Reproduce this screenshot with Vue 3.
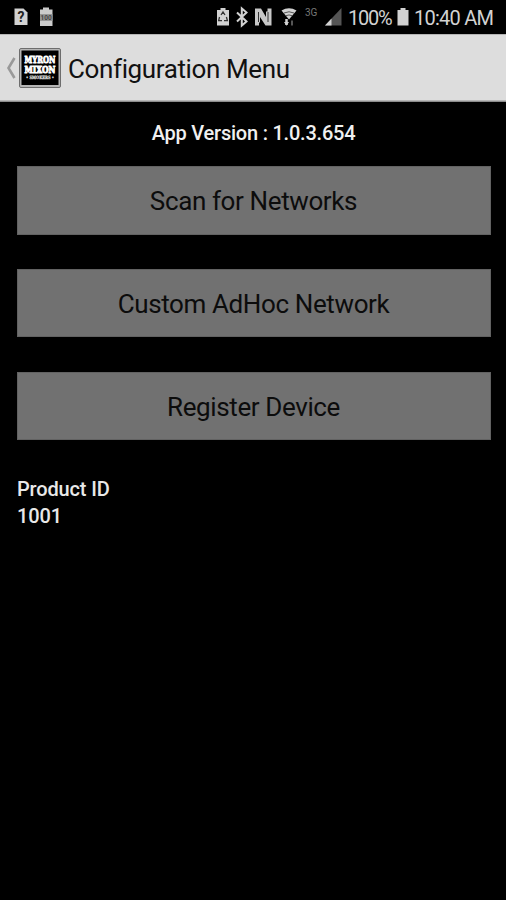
<script setup>
import { ref } from 'vue'

const appVersion = ref('1.0.3.654')
const productId = ref('1001')

const buttons = [
  { id: 'scan', title: 'Scan for Networks' },
  { id: 'adhoc', title: 'Custom AdHoc Network' },
  { id: 'register', title: 'Register Device' }
]
</script>

<template>
  <div class="screen">
    <div class="status-bar">
      <svg class="status-icons" width="60" height="34" viewBox="0 0 60 34">
        <path d="M14.500 8.500h9l4 4v12.500h-13z" fill="#d2d2d2" />
        <text x="21" y="22" class="question">?</text>
        <path d="M40 9.500h3v-2h6v2h3.500v16.500H40z" fill="#cbcbcb" />
        <path d="M40 14h12.500v7H40z" fill="#969696" />
        <text x="46.200" y="20.300" class="battery-text">100</text>
      </svg>
      <div class="status-right">
        <svg width="130" height="34" viewBox="214 0 130 34">
          <!-- power saving battery -->
          <path d="M217 10h3.500v-2h5v2h3.500v15.500h-12z" fill="#d2d2d2" />
          <g fill="none" stroke="#333" stroke-width="1.300">
            <path d="M221 15l2-3 2 3M219.500 17l-.8 3.700h3.300M224 20.700h3.400l-1-3.700" />
          </g>
          <!-- bluetooth -->
          <path d="M237 12.500l9.500 9-4.700 4V8.500l4.700 4-9.500 9" fill="none" stroke="#d2d2d2" stroke-width="2" />
          <!-- nfc -->
          <path d="M255 8.500h6l5 8.500v-5.500h1.500V8.500h4v17h-6L260 17v5.500h-1v3h-4z" fill="#c8c8c8" />
          <path d="M258.500 12v10M268 12v10" fill="none" stroke="#333" stroke-width="1" />
          <!-- wifi -->
          <path d="M281.500 10.500q7.500-4.500 15 0l-7.500 9z" fill="#d2d2d2" />
          <path d="M284 13q5-2.500 10 0M286 15.700q3-1.500 6 0" fill="none" stroke="#333" stroke-width=".8" />
          <path d="M286.500 19v6" fill="none" stroke="#d2d2d2" stroke-width="2.500" />
          <path d="M284 22h5l-2.500 3.800z" fill="#d2d2d2" />
          <path d="M292 25.500v-5" fill="none" stroke="#555" stroke-width="2" />
          <text x="305" y="16" class="network">3G</text>
          <!-- signal -->
          <path d="M325 25.500L341.500 8v17.500z" fill="#555" />
          <path d="M325 25.500l6.500-7v7z" fill="#d2d2d2" />
        </svg>
        <span class="percent">100%</span>
        <svg class="battery" width="14" height="34" viewBox="0 0 14 34">
          <path d="M1.500 10h3V8h5v2h3v15.500h-11z" fill="#d2d2d2" />
        </svg>
        <span class="clock">10:40 AM</span>
      </div>
    </div>

    <header class="action-bar">
      <svg class="back" width="12" height="24" viewBox="0 0 12 24">
        <path d="M9.500 2L3.500 12l6 10" fill="none" stroke="#999" stroke-width="2.600" />
      </svg>
      <svg class="logo" width="42" height="40" viewBox="0 0 42 40">
        <rect x=".5" y=".5" width="41" height="39" rx="1.500" fill="#b5b5b5" stroke="#6d6d6d" />
        <rect x="2.500" y="2.500" width="37" height="34.500" fill="#000" />
        <text x="21" y="14.500" class="brand" textLength="31" lengthAdjust="spacingAndGlyphs">MYRON</text>
        <text x="21" y="25" class="brand" textLength="31" lengthAdjust="spacingAndGlyphs">MIXON</text>
        <text x="21" y="31" class="brand-small" textLength="28" lengthAdjust="spacingAndGlyphs">• SMOKERS •</text>
      </svg>
      <h1 class="title">Configuration Menu</h1>
    </header>

    <main class="content">
      <p class="version">App Version : {{ appVersion }}</p>
      <div class="buttons">
        <button v-for="button in buttons" :key="button.id" class="menu-button">{{ button.title }}</button>
      </div>
      <div class="product">
        <p>Product ID</p>
        <p>{{ productId }}</p>
      </div>
    </main>
  </div>
</template>

<style>
body {
  background: #000;
}
</style>

<style scoped>
.screen {
  width: 506px;
  height: 900px;
  overflow: hidden;
  background: #000;
  font-family: Roboto, "Liberation Sans", sans-serif;
}

.status-bar {
  display: flex;
  justify-content: space-between;
  height: 34px;
  color: #d2d2d2;
}

.status-right {
  display: flex;
  padding-right: 12px;
  font-size: 20px;
  line-height: 36px;
  white-space: nowrap;
}

.percent {
  width: 44px;
  margin-left: 4px;
  letter-spacing: -1.2px;
}

.battery {
  margin: 0 4px;
}

.clock {
  width: 80px;
  letter-spacing: -0.75px;
}

.question {
  font-size: 14px;
  font-weight: 700;
  text-anchor: middle;
  fill: #222;
}

.battery-text {
  font-size: 6.5px;
  font-weight: 700;
  text-anchor: middle;
  fill: #444;
}

.network {
  font-size: 10px;
  fill: #777;
}

.action-bar {
  display: flex;
  align-items: center;
  box-sizing: border-box;
  height: 68px;
  padding-left: 5px;
  background: #ddd;
  border-top: 1px solid #b5b5b5;
  border-bottom: 1px solid #8c8c8c;
  box-shadow: inset 0 -1px #b5b5b5;
}

.back {
  margin-right: 2px;
}

.logo {
  overflow: visible;
}

.brand {
  font-family: "DejaVu Serif", serif;
  font-size: 9px;
  font-weight: 700;
  text-anchor: middle;
  fill: #fff;
  stroke: #fff;
  stroke-width: 0.9px;
}

.brand-small {
  font-family: "DejaVu Serif", serif;
  font-size: 4.5px;
  font-weight: 700;
  text-anchor: middle;
  fill: #ddd;
  stroke: #ddd;
  stroke-width: 0.3px;
}

.title {
  margin: 2px 0 0 7px;
  font-size: 26px;
  font-weight: 400;
  line-height: 32px;
  letter-spacing: -0.38px;
  color: #111;
}

.content {
  padding: 18px 15.5px 0 16.5px;
}

.version {
  margin: 0;
  font-size: 20px;
  font-weight: 500;
  line-height: 26px;
  letter-spacing: -0.22px;
  text-align: center;
  color: #f0f0f0;
}

.buttons {
  display: flex;
  flex-direction: column;
  gap: 34.3px;
  margin-top: 20px;
}

.menu-button {
  height: 68.5px;
  padding: 1.5px 0 0;
  border: 1px solid #626262;
  background: #717171;
  font-family: inherit;
  font-size: 26px;
  letter-spacing: -0.38px;
  color: #0c0c0c;
}

.product {
  margin-top: 36px;
  padding-left: 0.5px;
  font-size: 20px;
  font-weight: 500;
  line-height: 26.5px;
  letter-spacing: -0.15px;
  color: #e8e8e8;
}

.product p {
  margin: 0;
}
</style>
